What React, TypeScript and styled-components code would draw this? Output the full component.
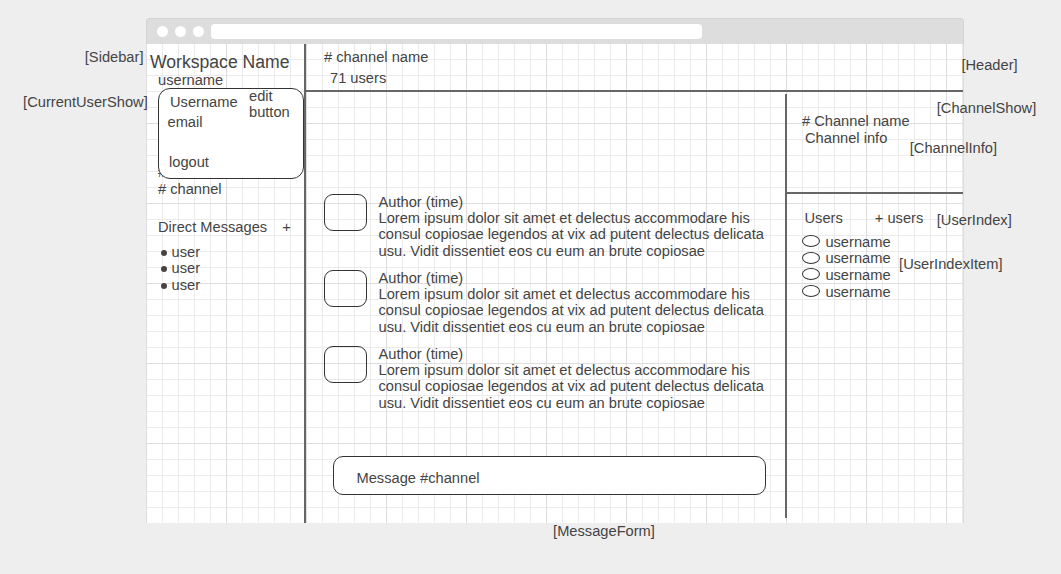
import React from "react";
import styled, { createGlobalStyle } from "styled-components";

const GlobalStyle = createGlobalStyle`
  html, body { margin: 0; padding: 0; background: #eeeeee; }
  body {
    font-family: "Liberation Sans", Arial, sans-serif;
    font-size: 11pt;
    color: #444444;
  }
  * { box-sizing: border-box; }
`;

const Canvas = styled.div`
  position: relative;
  width: 1061px;
  height: 574px;
  padding: 18px 0 0 146px;
  overflow: hidden;
`;

const Window = styled.div`
  width: 818px;
  height: 505px;
  display: flex;
  flex-direction: column;
`;

const TitleBar = styled.div`
  flex: none;
  height: 26px;
  display: flex;
  align-items: center;
  gap: 7px;
  padding-left: 9.5px;
  background: #dddddd;
  border: 1px solid #d3d3d3;
  border-bottom: none;
  border-radius: 4px 4px 0 0;
`;

const WinDot = styled.span`
  width: 11px;
  height: 11px;
  border-radius: 50%;
  background: #ffffff;
`;

const AddressBar = styled.span`
  width: 491px;
  height: 15px;
  border-radius: 4px;
  background: #ffffff;
`;

const Content = styled.div`
  flex: 1;
  min-height: 0;
  display: grid;
  grid-template-columns: 160px minmax(0, 1fr);
  background-color: #ffffff;
  background-image:
    linear-gradient(to right, #dddddd 1px, transparent 1px),
    linear-gradient(to bottom, #dddddd 1px, transparent 1px),
    linear-gradient(to right, #ebebeb 1px, transparent 1px),
    linear-gradient(to bottom, #ebebeb 1px, transparent 1px);
  background-size: 80px 80px, 80px 80px, 16px 16px, 16px 16px;
  background-position: 0 0, 0 79px, 0 0, 0 15px;
  border-right: 1px solid #dddddd;
`;

/* ---------- Sidebar ---------- */

const Sidebar = styled.aside`
  position: relative;
  display: flex;
  flex-direction: column;
  padding: 7.75px 0 0 12px;
  border-right: 2px solid #666666;
`;

const WorkspaceName = styled.div`
  margin-left: -8px;
  font-size: 17.6px;
  line-height: 20px;
  white-space: nowrap;
`;

const Line = styled.div`
  line-height: 17px;
  white-space: nowrap;
`;

const ChannelList = styled.div`
  margin-top: 75.5px;
  display: flex;
  flex-direction: column;
`;

const DMHeader = styled.div`
  margin-top: 21px;
  display: flex;
  gap: 15px;
  line-height: 17px;
`;

const DMList = styled.div`
  margin-top: 7.5px;
  display: flex;
  flex-direction: column;
`;

const DMItem = styled.div`
  display: flex;
  align-items: center;
  gap: 5px;
  padding-left: 2.5px;
  line-height: 16.7px;
`;

const Bullet = styled.span`
  width: 6px;
  height: 6px;
  margin-top: 1px;
  border-radius: 50%;
  background: #444444;
`;

const CurrentUserBox = styled.div`
  position: absolute;
  z-index: 1;
  left: 12px;
  top: 44px;
  width: 146px;
  height: 91px;
  display: flex;
  flex-direction: column;
  background: #ffffff;
  border: 1px solid #333333;
  border-radius: 12px;
`;

const UserTopRow = styled.div`
  display: flex;
`;

const UserCol = styled.div`
  width: 90px;
  padding: 4.75px 0 0 11px;
  line-height: 17px;
`;

const Email = styled.div`
  margin: 3px 0 0 -2.5px;
`;

const EditButton = styled.div`
  margin-top: -0.75px;
  line-height: 16px;
`;

const Logout = styled.div`
  margin-top: auto;
  margin-bottom: 7.25px;
  padding-left: 10px;
  line-height: 17px;
`;

/* ---------- Main ---------- */

const Main = styled.main`
  display: grid;
  grid-template-rows: 48px minmax(0, 1fr);
  min-width: 0;
  min-height: 0;
`;

const Header = styled.header`
  padding: 4.75px 0 0 18px;
  border-bottom: 2px solid #666666;
  line-height: 17px;
`;

const UserCount = styled.div`
  margin: 3.8px 0 0 6px;
`;

const Body = styled.div`
  display: flex;
  min-width: 0;
  min-height: 0;
`;

const MessagePanel = styled.section`
  flex: 1 1 0;
  min-width: 0;
  display: flex;
  flex-direction: column;
  padding: 101px 19px 28px 18px;
`;

const MessageList = styled.div`
  display: flex;
  flex-direction: column;
  gap: 9.45px;
`;

const MessageRow = styled.div`
  display: flex;
  align-items: flex-start;
  gap: 11.5px;
`;

const Avatar = styled.div`
  flex: none;
  width: 43px;
  height: 37px;
  margin-top: 1px;
  border: 1px solid #333333;
  border-radius: 9px;
`;

const MessageText = styled.div`
  flex: none;
  width: 395px;
  padding-top: 0.75px;
`;

const Author = styled.div`
  line-height: 16px;
`;

const Lorem = styled.div`
  line-height: 16.6px;
`;

const MessageForm = styled.div`
  flex: none;
  margin: auto 0 0 9px;
  width: 433px;
  height: 39px;
  padding: 12.75px 0 0 22.5px;
  border: 1px solid #333333;
  border-radius: 10px;
  background: #ffffff;
  line-height: 17px;
`;

const RightPanel = styled.section`
  flex: none;
  width: 178px;
  margin: 2px 0 5px;
  display: flex;
  flex-direction: column;
  border-left: 2px solid #666666;
`;

const ChannelShow = styled.div`
  height: 100px;
  padding: 18.75px 0 0 15px;
  border-bottom: 2px solid #666666;
  line-height: 17px;
`;

const ChannelInfo = styled.div`
  margin-left: 3px;
`;

const UserIndex = styled.div`
  padding: 15.75px 0 0 15px;
`;

const UserIndexHeader = styled.div`
  display: flex;
  gap: 32px;
  margin-left: 2.5px;
  line-height: 17px;
`;

const UserItems = styled.div`
  margin-top: 7px;
  display: flex;
  flex-direction: column;
`;

const UserItem = styled.div`
  display: flex;
  align-items: center;
  gap: 5.4px;
  line-height: 16.6px;
`;

const UserCircle = styled.span`
  width: 18px;
  height: 12px;
  margin-top: -1.5px;
  border: 1px solid #333333;
  border-radius: 50%;
`;

const Note = styled.span<{ $x: number; $y: number }>`
  position: absolute;
  z-index: 2;
  left: ${(p) => p.$x}px;
  top: ${(p) => p.$y}px;
  line-height: 17px;
  white-space: nowrap;
`;

const lorem = [
  "Lorem ipsum dolor sit amet et delectus accommodare his",
  "consul copiosae legendos at vix ad putent delectus delicata",
  "usu. Vidit dissentiet eos cu eum an brute copiosae",
].join(" ");

const notes: { label: string; x: number; y: number }[] = [
  { label: "[Sidebar]", x: 84.8, y: 49 },
  { label: "[CurrentUserShow]", x: 23.1, y: 94 },
  { label: "[Header]", x: 961.4, y: 56.5 },
  { label: "[ChannelShow]", x: 936.8, y: 100 },
  { label: "[ChannelInfo]", x: 909.8, y: 140 },
  { label: "[UserIndex]", x: 936.8, y: 211.5 },
  { label: "[UserIndexItem]", x: 899.1, y: 255.5 },
  { label: "[MessageForm]", x: 553.1, y: 522.5 },
];

export default function App() {
  return (
    <>
      <GlobalStyle />
      <Canvas>
        <Window>
          <TitleBar>
            <WinDot />
            <WinDot />
            <WinDot />
            <AddressBar />
          </TitleBar>
          <Content>
            <Sidebar>
              <WorkspaceName>Workspace Name</WorkspaceName>
              <Line>username</Line>
              <CurrentUserBox>
                <UserTopRow>
                  <UserCol>
                    <div>Username</div>
                    <Email>email</Email>
                  </UserCol>
                  <EditButton>
                    edit
                    <br />
                    button
                  </EditButton>
                </UserTopRow>
                <Logout>logout</Logout>
              </CurrentUserBox>
              <ChannelList>
                <Line># channel</Line>
                <Line># channel</Line>
              </ChannelList>
              <DMHeader>
                <span>Direct Messages</span>
                <span>+</span>
              </DMHeader>
              <DMList>
                {["user", "user", "user"].map((u, i) => (
                  <DMItem key={i}>
                    <Bullet />
                    <span>{u}</span>
                  </DMItem>
                ))}
              </DMList>
            </Sidebar>
            <Main>
              <Header>
                <div># channel name</div>
                <UserCount>71 users</UserCount>
              </Header>
              <Body>
                <MessagePanel>
                  <MessageList>
                    {[0, 1, 2].map((i) => (
                      <MessageRow key={i}>
                        <Avatar />
                        <MessageText>
                          <Author>Author (time)</Author>
                          <Lorem>{lorem}</Lorem>
                        </MessageText>
                      </MessageRow>
                    ))}
                  </MessageList>
                  <MessageForm>Message #channel</MessageForm>
                </MessagePanel>
                <RightPanel>
                  <ChannelShow>
                    <div># Channel name</div>
                    <ChannelInfo>Channel info</ChannelInfo>
                  </ChannelShow>
                  <UserIndex>
                    <UserIndexHeader>
                      <span>Users</span>
                      <span>+ users</span>
                    </UserIndexHeader>
                    <UserItems>
                      {[0, 1, 2, 3].map((i) => (
                        <UserItem key={i}>
                          <UserCircle />
                          <span>username</span>
                        </UserItem>
                      ))}
                    </UserItems>
                  </UserIndex>
                </RightPanel>
              </Body>
            </Main>
          </Content>
        </Window>
        {notes.map((n) => (
          <Note key={n.label} $x={n.x} $y={n.y}>
            {n.label}
          </Note>
        ))}
      </Canvas>
    </>
  );
}
